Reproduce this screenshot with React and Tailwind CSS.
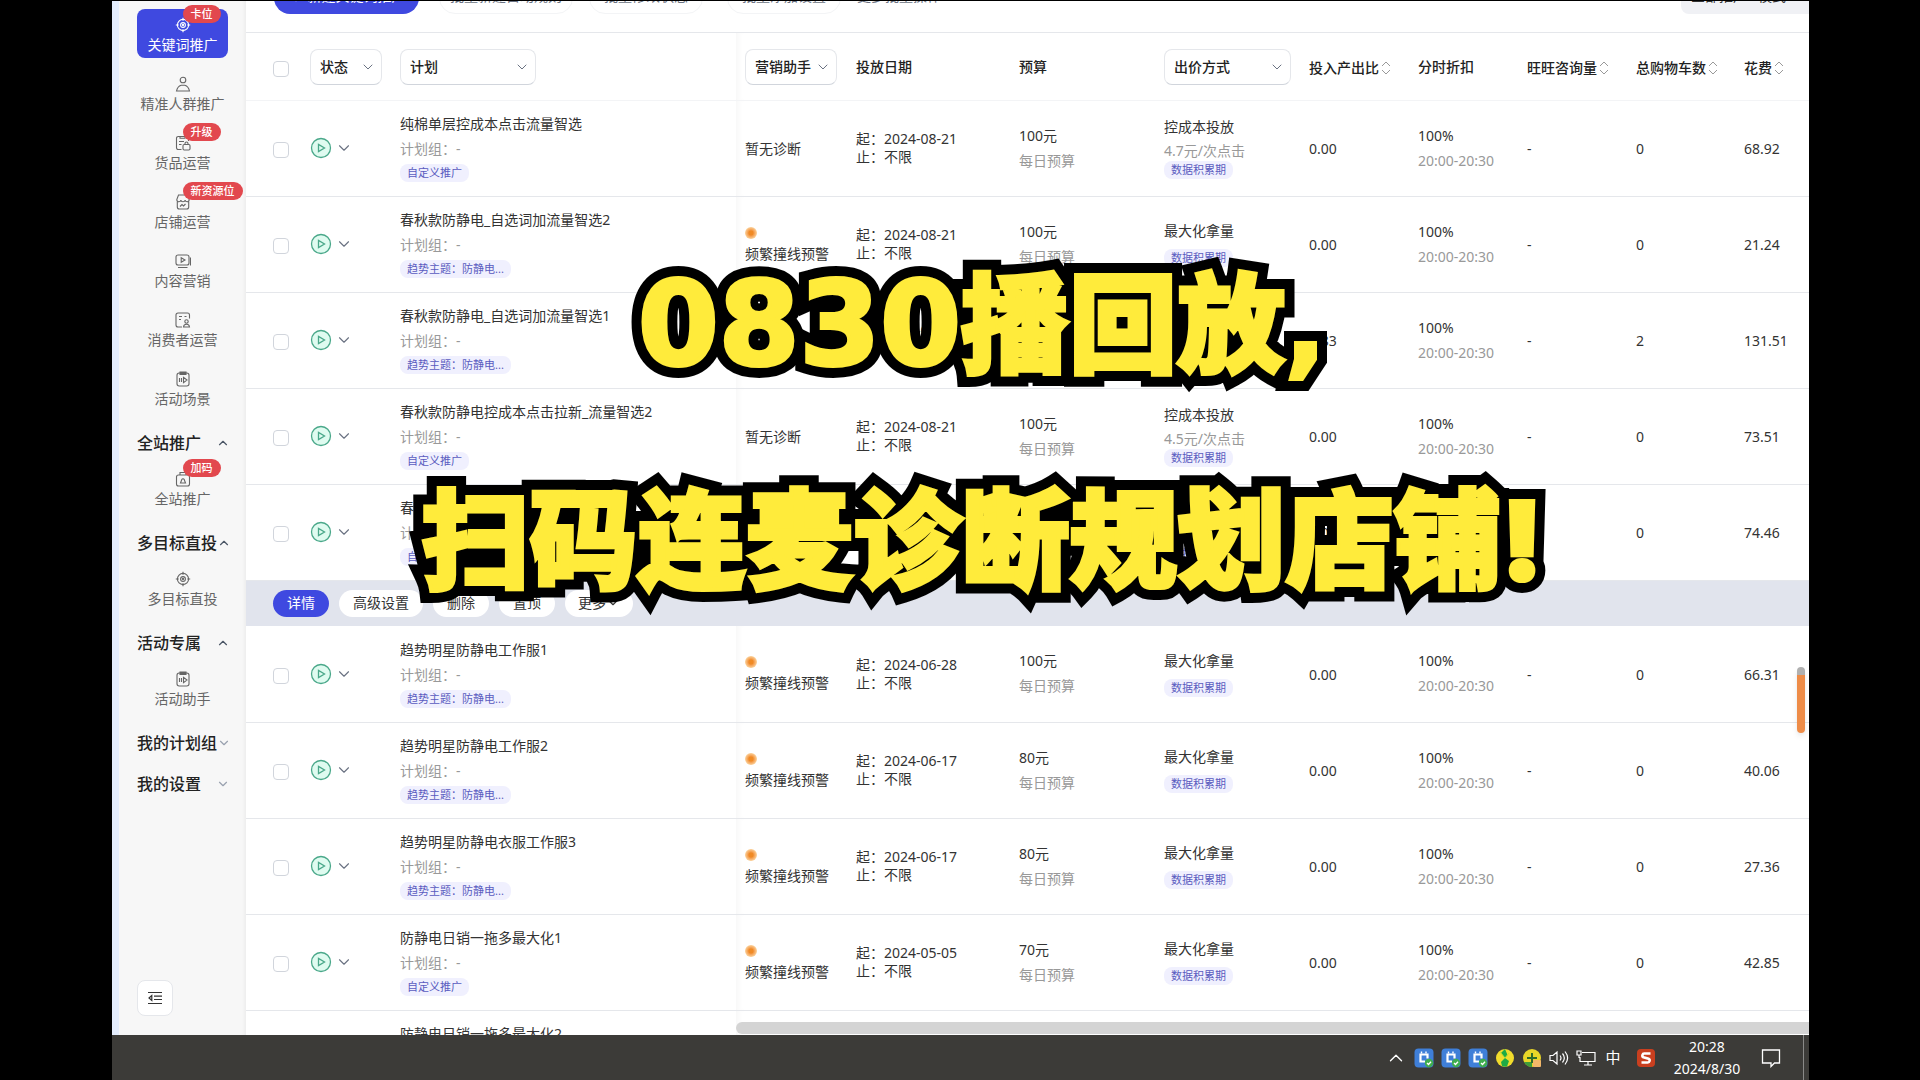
import React from 'react';
import { ChevronDown, ChevronUp, Plus } from 'lucide-react';

const navTop = [
    { label: '关键词推广', icon: 'target', badge: '卡位', active: true },
    { label: '精准人群推广', icon: 'user' },
    { label: '货品运营', icon: 'goods', badge: '升级' },
    { label: '店铺运营', icon: 'shop', badge: '新资源位' },
    { label: '内容营销', icon: 'video' },
    { label: '消费者运营', icon: 'consumer' },
    { label: '活动场景', icon: 'activity' },
];

const navGroups = [
    { title: '全站推广', open: true, items: [{ label: '全站推广', icon: 'bag', badge: '加码' }] },
    { title: '多目标直投', open: true, items: [{ label: '多目标直投', icon: 'target' }] },
    { title: '活动专属', open: true, items: [{ label: '活动助手', icon: 'activity' }] },
    { title: '我的计划组', open: false, items: [] },
    { title: '我的设置', open: false, items: [] },
];

const TREND = '趋势主题：防静电...';
const CUSTOM = '自定义推广';

const plans = [
    { name: '纯棉单层控成本点击流量智选', tag: CUSTOM, warn: false, start: '2024-08-21', budget: '100元', bid: '控成本投放', price: '4.7元/次点击', roi: '0.00', cart: '0', cost: '68.92' },
    { name: '春秋款防静电_自选词加流量智选2', tag: TREND, warn: true, start: '2024-08-21', budget: '100元', bid: '最大化拿量', roi: '0.00', cart: '0', cost: '21.24' },
    { name: '春秋款防静电_自选词加流量智选1', tag: TREND, warn: true, start: '2024-08-21', budget: '100元', bid: '最大化拿量', roi: '0.83', cart: '2', cost: '131.51' },
    { name: '春秋款防静电控成本点击拉新_流量智选2', tag: CUSTOM, warn: false, start: '2024-08-21', budget: '100元', bid: '控成本投放', price: '4.5元/次点击', roi: '0.00', cart: '0', cost: '73.51' },
    { name: '春秋款防静电控成本点击拉新', tag: CUSTOM, warn: false, start: '2024-08-21', budget: '100元', bid: '控成本投放', price: '4.5元/次点击', roi: '0.00', cart: '0', cost: '74.46', actions: true },
    { name: '趋势明星防静电工作服1', tag: TREND, warn: true, start: '2024-06-28', budget: '100元', bid: '最大化拿量', roi: '0.00', cart: '0', cost: '66.31' },
    { name: '趋势明星防静电工作服2', tag: TREND, warn: true, start: '2024-06-17', budget: '80元', bid: '最大化拿量', roi: '0.00', cart: '0', cost: '40.06' },
    { name: '趋势明星防静电衣服工作服3', tag: TREND, warn: true, start: '2024-06-17', budget: '80元', bid: '最大化拿量', roi: '0.00', cart: '0', cost: '27.36' },
    { name: '防静电日销一拖多最大化1', tag: CUSTOM, warn: true, start: '2024-05-05', budget: '70元', bid: '最大化拿量', roi: '0.00', cart: '0', cost: '42.85' },
    { name: '防静电日销一拖多最大化2', tag: CUSTOM, warn: true, start: '2024-05-05', budget: '70元', bid: '最大化拿量', roi: '0.00', cart: '0', cost: '35.20' },
];

const iconShapes = {
    target: (
        <>
            <circle cx="8" cy="8" r="5.6" />
            <circle cx="8" cy="8" r="2.4" />
            <path d="M8 .8v3M8 12.2v3M.8 8h3M12.2 8h3" />
            <circle cx="8" cy="8" r=".6" />
        </>
    ),
    user: (
        <>
            <circle cx="8" cy="4" r="2.8" />
            <path d="M1.5 15c.6-3 2.6-5.2 4.7-5.8h3.6c2.1.6 4.1 2.8 4.7 5.8z" />
        </>
    ),
    goods: (
        <>
            <path d="M6.5 14.5H3.2a1.7 1.7 0 0 1-1.7-1.7V3.2a1.7 1.7 0 0 1 1.7-1.7h8.600a1.700 1.700 0 0 1 1.700 1.700V6" />
            <path d="M5 1.500h5v1.800H5zM4 6.500h5M4 9.500h2.500" />
            <rect x="8" y="9.500" width="7" height="5.500" rx="1.200" />
            <path d="M10 9.500V8.500a1.500 1.500 0 0 1 3 0v1" />
        </>
    ),
    shop: (
        <>
            <path d="M3.500 1h9l1.700 4.500c0 1.500-1 2.300-2 2.300s-2-.8-2.100-1.800c-.1 1-1 1.800-2.100 1.800S6 7 5.900 6c-.1 1-1 1.800-2.100 1.800s-2-.8-2-2.300z" />
            <path d="M2.300 8v5a2 2 0 0 0 2 2h7.400a2 2 0 0 0 2-2V8" />
            <path d="M5 12.500l2-2 1.500 1.500 2-2" />
        </>
    ),
    video: (
        <>
            <rect x="1" y="2" width="13" height="10" rx="2" />
            <path d="M6.200 4.800v4.500L10 7zM3 14.500h9.500M15.500 4.500v8" />
        </>
    ),
    consumer: (
        <>
            <path d="M7 15H3a2 2 0 0 1-2-2V3a2 2 0 0 1 2-2h9.500a2 2 0 0 1 2 2v3.500" />
            <path d="M4 4.500h3M9.500 4.500h2M4 7.500h2" />
            <circle cx="11.500" cy="9.500" r="1.700" />
            <path d="M8.500 15c.2-1.800 1.300-2.800 3-2.800s2.800 1 3 2.800z" />
        </>
    ),
    activity: (
        <>
            <rect x="2" y="2" width="12" height="13" rx="2.200" />
            <path d="M5 1h6v2.500H5z" fill="currentColor" />
            <path d="M4.500 7v4M6.500 7v4M8.500 6.300v5.400l3.500-2.700z" />
        </>
    ),
    bag: (
        <>
            <rect x="1.500" y="4" width="13" height="11" rx="2" />
            <path d="M5 4V1.500h6V4M5.500 12l1.300-3.500a1.300 1.300 0 0 1 2.400 0L10.500 12z" />
        </>
    ),
};

const NavIcon = ({ name }) => (
    <svg viewBox="0 0 16 16" className="w-4 h-4" fill="none" stroke="currentColor" strokeWidth="1.1" aria-hidden="true">
        {iconShapes[name]}
    </svg>
);

const NavItem = ({ item }) => {
    const tone = item.active ? 'bg-[#3f49e0] text-white' : 'text-[#666666]';
    return (
        <button type="button" className={`relative w-full h-[49px] shrink-0 rounded-lg flex flex-col items-center justify-center gap-0.5 pt-1 text-sm whitespace-nowrap ${tone}`}>
            <NavIcon name={item.icon} />
            <span className="leading-5">{item.label}</span>
            {item.badge && (
                <span className="absolute left-1/2 -top-1 h-[18px] px-2 rounded-full bg-[#e2484e] text-white text-[11px] font-medium leading-[18px]">
                    {item.badge}
                </span>
            )}
        </button>
    );
};

const Sidebar = () => (
    <aside className="w-[134px] shrink-0 border-l-[7px] border-[#e4edfd] bg-[#f7f7f7] flex flex-col pl-[18px] pr-[18px] pt-2 pb-[19px] shadow-[inset_-4px_0_4px_-3px_rgba(0,0,0,0.06)]">
        <nav className="flex flex-col gap-[10px]">
            {navTop.map((item) => (
                <NavItem key={item.label} item={item} />
            ))}
            {navGroups.map((group) => (
                <React.Fragment key={group.title}>
                    <button type="button" className="mt-[10px] h-[21px] flex items-center justify-between text-base leading-5 font-medium text-[#222222] whitespace-nowrap">
                        {group.title}
                        {group.open ? (
                            <ChevronUp className="w-3.5 h-3.5 -mr-0.5 shrink-0 text-gray-600" />
                        ) : (
                            <ChevronDown className="w-3.5 h-3.5 -mr-0.5 shrink-0 text-gray-400" />
                        )}
                    </button>
                    {group.items.map((item) => (
                        <NavItem key={item.label} item={item} />
                    ))}
                </React.Fragment>
            ))}
        </nav>
        <button type="button" aria-label="收起菜单" className="mt-auto w-9 h-9 shrink-0 rounded-lg bg-white border border-gray-200 flex items-center justify-center">
            <svg viewBox="0 0 14 14" className="w-3.5 h-3.5" fill="none" stroke="#333" strokeWidth="1.2" aria-hidden="true">
                <path d="M0 1.500h14M6 5.200h8M6 8.500h8M0 12.500h14M3.800 4.500L1 7l2.800 2.500z" />
            </svg>
        </button>
    </aside>
);

const Toolbar = () => (
    <div className="h-8 shrink-0 border-b border-gray-200 pl-7 pb-[18px] flex items-end overflow-hidden text-sm text-gray-500 whitespace-nowrap">
        <button type="button" className="h-8 pb-1 shrink-0 w-[145px] rounded-full bg-[#3f49e0] text-white flex items-center justify-center gap-1">
            <Plus className="w-4 h-4" />
            新建关键词推广
        </button>
        <button type="button" className="h-8 pb-1 shrink-0 ml-5 px-[10px] rounded-full border border-gray-100">批量新建自动规则</button>
        <button type="button" className="h-8 pb-1 shrink-0 ml-4 px-[14px] rounded-full border border-gray-100">批量修改状态</button>
        <button type="button" className="h-8 pb-1 shrink-0 ml-6 px-[14px] rounded-full border border-gray-100">批量添加设置</button>
        <button type="button" className="h-8 pb-1 shrink-0 ml-4">更多批量操作</button>
        <button type="button" className="h-8 pb-1 shrink-0 ml-auto w-[128px] pl-[10px] rounded-l-lg bg-[#f0f1f5] text-left text-[#333333]">全部推广&nbsp;&nbsp; 模式</button>
    </div>
);

const FilterSelect = ({ label, className }) => (
    <span className={`relative inline-block align-middle ${className}`}>
        <select aria-label={label} defaultValue={label} className="appearance-none w-full h-9 pl-[9px] rounded-lg border border-gray-200 border-b-gray-300 bg-white text-sm font-medium text-[#222222]">
            <option>{label}</option>
        </select>
        <ChevronDown className="absolute right-[6px] top-[10px] w-4 h-4 text-gray-500 pointer-events-none" strokeWidth={1.5} />
    </span>
);

const SortHeader = ({ label }) => (
    <th className="p-0 pt-1 font-medium text-left">
        <button type="button" className="flex items-center gap-0.5 whitespace-nowrap">
            {label}
            <svg viewBox="0 0 10 14" className="w-[10px] h-3.5" fill="none" stroke="#999" strokeWidth="1" aria-hidden="true">
                <path d="M1 5l4-4 4 4M1 9l4 4 4-4" />
            </svg>
        </button>
    </th>
);

const Tag = ({ children }) => (
    <span className="h-[18px] px-[7px] rounded-lg bg-[#f0f0fe] text-[#5a5cc0] text-[11px] leading-[18px] whitespace-nowrap">{children}</span>
);

const CheckBox = ({ label }) => (
    <input type="checkbox" aria-label={label} className="block appearance-none w-4 h-4 ml-[27px] mt-1 rounded border border-gray-300 bg-white" />
);

const PlanRow = ({ plan }) => (
    <tr className="h-24 border-b border-gray-200">
        <td className="p-0"><CheckBox label={plan.name} /></td>
        <td className="p-0">
            <button type="button" aria-label="切换状态" className="flex items-center gap-[3px]">
                <svg viewBox="0 0 22 22" className="w-[22px] h-[22px]" fill="none" stroke="#4aa88a" strokeWidth="1.3" aria-hidden="true">
                    <circle cx="11" cy="11" r="9.500" fill="#dffbf0" />
                    <path d="M8.500 7.500v7l6-3.500z" />
                </svg>
                <ChevronDown className="w-[18px] h-[18px] text-gray-500" strokeWidth={1.5} />
            </button>
        </td>
        <td className="p-0">
            <div className="flex flex-col items-start gap-[5px] whitespace-nowrap">
                <span>{plan.name}</span>
                <span className="text-[#999999]">计划组：-</span>
                <Tag>{plan.tag}</Tag>
            </div>
        </td>
        <td className="p-0 pl-[9px] shadow-[inset_6px_0_6px_-4px_rgba(0,0,0,0.04)]">
            <div className="pt-0.5 whitespace-nowrap">
                {plan.warn ? (
                    <>
                        <span className="block w-3 h-3 mb-[5px] rounded-full bg-radial from-[#f08a24] from-25% to-[#fbd9a5] to-75%"></span>
                        频繁撞线预警
                    </>
                ) : '暂无诊断'}
            </div>
        </td>
        <td className="p-0">
            <div className="leading-[18px] whitespace-nowrap">
                <div>起：{plan.start}</div>
                <div>止：不限</div>
            </div>
        </td>
        <td className="p-0">
            <div>{plan.budget}</div>
            <div className="mt-[5px] text-[#999999]">每日预算</div>
        </td>
        <td className="p-0">
            <div className="flex flex-col items-start whitespace-nowrap">
                <span>{plan.bid}</span>
                {plan.price ? <span className="mt-1 text-[#999999]">{plan.price}</span> : <span className="h-2"></span>}
                <Tag>数据积累期</Tag>
            </div>
        </td>
        <td className="p-0 pt-0.5">{plan.roi}</td>
        <td className="p-0">
            <div>100%</div>
            <div className="mt-[5px] text-[#999999]">20:00-20:30</div>
        </td>
        <td className="p-0 pt-0.5">-</td>
        <td className="p-0 pt-0.5">{plan.cart}</td>
        <td className="p-0 pt-0.5">{plan.cost}</td>
    </tr>
);

const ActionRow = () => (
    <tr className="h-[46px] bg-[#e1e4ed]">
        <td colSpan="12" className="p-0 pl-[27px]">
            <div className="flex items-center gap-[10px]">
                <button type="button" className="h-[27px] px-[14px] rounded-full bg-[#3f49e0] text-white">详情</button>
                <button type="button" className="h-[27px] px-[14px] rounded-full bg-white">高级设置</button>
                <button type="button" className="h-[27px] px-[14px] rounded-full bg-white">删除</button>
                <button type="button" className="h-[27px] px-[14px] rounded-full bg-white">置顶</button>
                <button type="button" className="h-[27px] px-[13px] rounded-full bg-white flex items-center">
                    更多
                    <ChevronDown className="w-3.5 h-3.5" />
                </button>
            </div>
        </td>
    </tr>
);

const PlanTable = () => (
    <table className="w-full table-fixed border-collapse text-sm leading-5 text-[#333333]">
        <colgroup>
            <col className="w-16" />
            <col className="w-[90px]" />
            <col />
            <col className="w-[120px]" />
            <col className="w-[163px]" />
            <col className="w-[145px]" />
            <col className="w-[145px]" />
            <col className="w-[109px]" />
            <col className="w-[109px]" />
            <col className="w-[109px]" />
            <col className="w-[108px]" />
            <col className="w-[65px]" />
        </colgroup>
        <thead>
            <tr className="h-[67px] border-b border-gray-100 text-[#222222]">
                <th className="p-0 pt-0.5"><CheckBox label="全选" /></th>
                <th className="p-0 pt-0.5 text-left"><FilterSelect label="状态" className="w-[72px]" /></th>
                <th className="p-0 pt-0.5 text-left"><FilterSelect label="计划" className="w-[136px]" /></th>
                <th className="p-0 pt-0.5 pl-[9px] text-left shadow-[inset_6px_0_6px_-4px_rgba(0,0,0,0.04)]"><FilterSelect label="营销助手" className="w-[92px]" /></th>
                <th className="p-0 pt-0.5 text-left font-medium">投放日期</th>
                <th className="p-0 pt-0.5 text-left font-medium">预算</th>
                <th className="p-0 pt-0.5 text-left"><FilterSelect label="出价方式" className="w-[127px]" /></th>
                <SortHeader label="投入产出比" />
                <th className="p-0 pt-0.5 text-left font-medium">分时折扣</th>
                <SortHeader label="旺旺咨询量" />
                <SortHeader label="总购物车数" />
                <SortHeader label="花费" />
            </tr>
        </thead>
        <tbody>
            {plans.map((plan) => (
                <React.Fragment key={plan.name}>
                    <PlanRow plan={plan} />
                    {plan.actions && <ActionRow />}
                </React.Fragment>
            ))}
        </tbody>
    </table>
);

const SyncIcon = () => (
    <svg viewBox="0 0 20 20" className="w-5 h-5" aria-hidden="true">
        <rect x=".5" y=".5" width="19" height="19" rx="4" fill="#3f7fd8" />
        <path d="M13.500 6.500H6.500v7H11M13.500 5.500v5" fill="none" stroke="#fff" strokeWidth="2.200" />
        <path d="M7.500 3.500v2M12 3.500v2" fill="none" stroke="#fff" strokeWidth="1.400" />
        <circle cx="15" cy="15" r="4.200" fill="#3fae4e" />
        <path d="M13 15l1.500 1.500 2.500-2.800" fill="none" stroke="#fff" strokeWidth="1.300" />
    </svg>
);

const Taskbar = () => (
    <footer className="h-[45px] shrink-0 bg-[#3c3b38] pr-[5px] flex items-center justify-end text-white">
        <ChevronUp className="w-[22px] h-[22px] mr-[7px]" strokeWidth={1.5} />
        <div className="flex items-center gap-[7px]">
            <SyncIcon />
            <SyncIcon />
            <SyncIcon />
            <svg viewBox="0 0 20 20" className="w-5 h-5" aria-hidden="true">
                <circle cx="10" cy="10" r="9" fill="#f2dc2c" />
                <path d="M10 1l2.500 6L10 10l4 3-2 5.500a9 9 0 0 1-5-.5l-1-4 4-4-4-5z" fill="#1faa45" />
                <path d="M5 4l5 6 4-5" fill="none" stroke="#c9dc2c" strokeWidth="1" />
            </svg>
            <svg viewBox="0 0 20 20" className="w-5 h-5" aria-hidden="true">
                <circle cx="10" cy="10" r="9" fill="#e8d628" />
                <path d="M2 14a9 9 0 0 0 8 5v-5z" fill="#3f9c3a" />
                <path d="M10 5v10M5 10h10" stroke="#2e6b2a" strokeWidth="2" />
                <rect x="11" y="12" width="8" height="7" rx="1" fill="#f3b76a" />
            </svg>
            <svg viewBox="0 0 20 20" className="w-5 h-5" fill="none" stroke="#fff" strokeWidth="1.200" aria-hidden="true">
                <path d="M1 7.500h3L8 4v12l-4-3.500H1zM11 7.500c1.200 1.500 1.200 3.500 0 5M13.500 5.500c2.200 2.700 2.200 6.300 0 9M16 3.500c3.200 4 3.200 9 0 13" />
            </svg>
            <svg viewBox="0 0 20 20" className="w-5 h-5" fill="none" stroke="#fff" strokeWidth="1.200" aria-hidden="true">
                <path d="M6 4.500h13v9H4V9M12 13.500V17M8 17h8M1 3h4v4H1zM3 7v3" />
            </svg>
            <span className="w-5 text-center text-[15px]">中</span>
        </div>
        <svg viewBox="0 0 18 18" className="w-[18px] h-[18px] ml-[14px]" aria-hidden="true">
            <rect width="18" height="18" rx="4" fill="#c93f1f" />
            <path d="M13.500 4.500H7.500a2 2 0 0 0-1 3.800l5 1.400a2 2 0 0 1-1 3.800H4.500" fill="none" stroke="#fff" strokeWidth="2.600" />
        </svg>
        <div className="w-[104px] text-center text-sm leading-[22px]">
            <div>20:28</div>
            <div>2024/8/30</div>
        </div>
        <svg viewBox="0 0 20 20" className="w-5 h-5 ml-0.5" fill="none" stroke="#fff" strokeWidth="1.300" aria-hidden="true">
            <path d="M1.500 2h17v13h-5L10 18.500V15H1.500z" />
        </svg>
        <span className="w-px h-full ml-[22px] bg-[#8a8a88]"></span>
    </footer>
);

// black outline below, slightly thickened yellow face on top of every outline
const Outlined = ({ text, className }) => (
    <span
        data-text={text}
        className={`relative inline-block leading-none [-webkit-text-stroke:24px_#000] after:content-[attr(data-text)] after:absolute after:left-0 after:top-0 after:z-10 after:[-webkit-text-stroke:4px_#ffeb3b] ${className}`}
    >
        {text}
    </span>
);

const Headline = () => (
    <div className="absolute inset-x-0 top-[209px] pl-11 text-center text-[108px] leading-[216px] font-black text-[#ffeb3b] font-['Noto_Sans_CJK_SC',sans-serif] whitespace-nowrap pointer-events-none">
        <div>
            <Outlined text="0830" className="text-[116px] font-['DejaVu_Sans',sans-serif]" />
            <Outlined text="播回放" className="" />
            <Outlined text="," className="font-['DejaVu_Sans',sans-serif]" />
        </div>
        <div>
            <Outlined text="扫码连麦诊断规划店铺" className="" />
            <Outlined text="!" className="font-['Inter',sans-serif]" />
        </div>
    </div>
);

export default function App() {
    return (
        <div className="relative h-screen overflow-hidden bg-black pl-28 pr-[111px] pt-px flex flex-col font-['Noto_Sans','Noto_Sans_CJK_SC',sans-serif]">
            <div className="flex-1 min-h-0 flex overflow-hidden">
                <Sidebar />
                <main className="relative flex-1 min-w-0 flex flex-col overflow-hidden bg-white">
                    <Toolbar />
                    <PlanTable />
                    <div className="absolute left-[490px] right-0 bottom-px h-3 rounded-l-md bg-[#d4d4d4]"></div>
                    <div className="absolute right-[4px] top-[666px] w-2 h-[66px] rounded-full border-t-8 border-[#b0b0b0] bg-[#ee8c48] shadow-md"></div>
                </main>
            </div>
            <Taskbar />
            <Headline />
        </div>
    );
}
